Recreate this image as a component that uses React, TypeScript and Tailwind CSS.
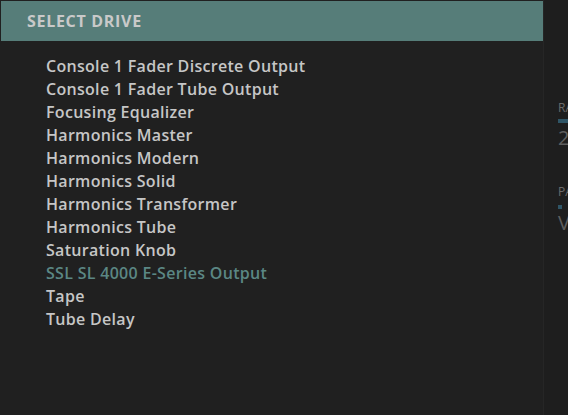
const drives = [
  "Console 1 Fader Discrete Output",
  "Console 1 Fader Tube Output",
  "Focusing Equalizer",
  "Harmonics Master",
  "Harmonics Modern",
  "Harmonics Solid",
  "Harmonics Transformer",
  "Harmonics Tube",
  "Saturation Knob",
  "SSL SL 4000 E-Series Output",
  "Tape",
  "Tube Delay",
];

const selected = "SSL SL 4000 E-Series Output";

export default function App() {
  return (
    <div
      className="relative flex h-[415px] w-[568px] overflow-hidden bg-[#1f1f1f]"
      style={{ fontFamily: '"Open Sans", "Liberation Sans", sans-serif' }}
    >
      {/* dialog */}
      <div className="flex w-[543px] shrink-0 flex-col bg-[#202020] pl-[1px] pt-[1px]">
        <div className="flex h-[40px] items-center bg-[#567d79] pl-[26px]">
          <span className="text-[16px] font-bold tracking-[0.7px] text-[#c9c9c9]">SELECT DRIVE</span>
        </div>
        <ul className="flex flex-col pl-[45px] pt-[14px]">
          {drives.map((d) => (
            <li
              key={d}
              className={
                d === selected
                  ? "h-[23px] text-[16px] font-semibold leading-[23px] tracking-[0.3px] text-[#5b8784]"
                  : "h-[23px] text-[16px] font-semibold leading-[23px] tracking-[0.3px] text-[#c6c6c6]"
              }
            >
              {d}
            </li>
          ))}
        </ul>
      </div>

      {/* panel behind, clipped at the window edge */}
      <div className="flex flex-1 border-l border-[#262626] bg-[#1e1e1e] pl-[14px]">
        <div className="flex flex-col pt-[101px] text-[#6b6b6b]">
          <span className="text-[12px] leading-[14px]">RATE</span>
          <div className="mt-[4px] h-[4px] w-[40px] bg-[#2f5566]" />
          <span className="mt-[3px] text-[20px] leading-[24px] text-[#5e5e5e]">2</span>
          <span className="mt-[35px] text-[12px] leading-[14px]">PAN</span>
          <div className="mt-[6px] flex gap-[2px]">
            <div className="h-[4px] w-[4px] bg-[#2f5566]" />
          </div>
          <span className="mt-[2px] text-[20px] leading-[24px] text-[#5e5e5e]">V</span>
        </div>
      </div>
    </div>
  );
}
